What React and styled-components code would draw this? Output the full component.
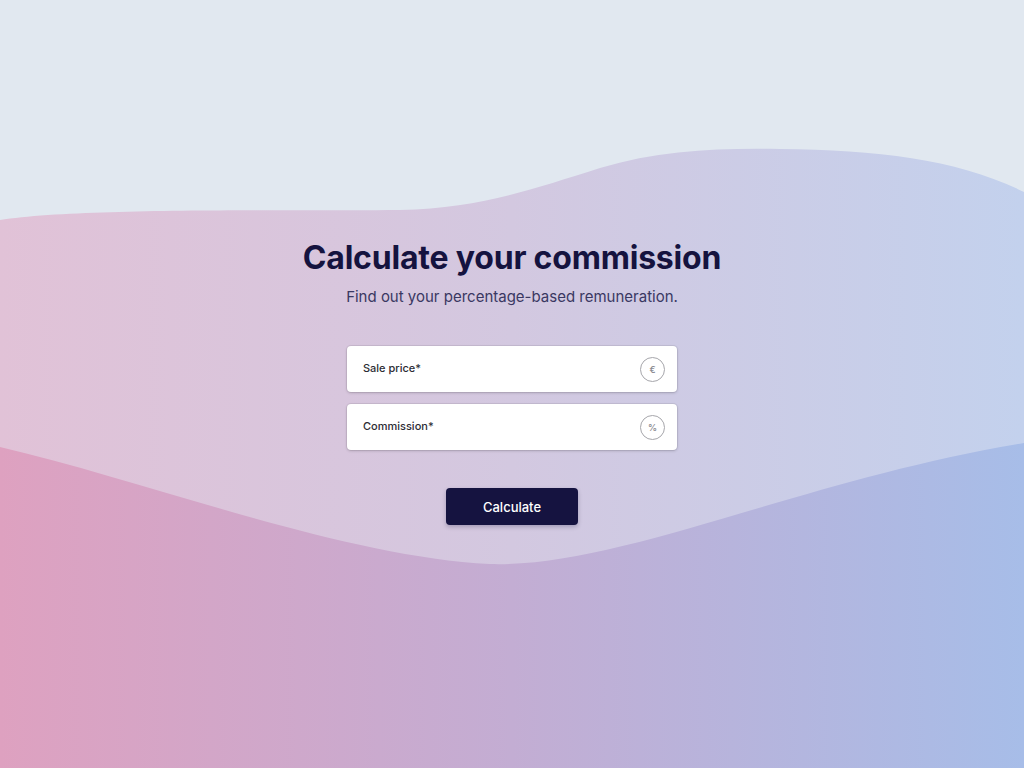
import React from "react";
import styled, { createGlobalStyle } from "styled-components";

const Global = createGlobalStyle`
  html, body { margin: 0; padding: 0; }
  body {
    font-family: Inter, "Noto Sans", "Liberation Sans", sans-serif;
    background: #e1e8f0;
  }
  #root { min-height: 100vh; }
`;

const Page = styled.div`
  position: relative;
  min-height: 100vh;
  overflow: hidden;
  background: #e1e8f0;
`;

const Waves = styled.svg`
  position: absolute;
  inset: 0;
  width: 100%;
  height: 100%;
  z-index: 0;
`;

const Content = styled.main`
  position: relative;
  z-index: 1;
  display: flex;
  flex-direction: column;
  align-items: center;
  padding-top: 238px;
`;

const Title = styled.h1`
  margin: 0;
  font-size: 32px;
  line-height: 40px;
  font-weight: 700;
  color: #15133f;
  letter-spacing: -0.2px;
`;

const Subtitle = styled.p`
  margin: 9px 0 0;
  font-size: 15px;
  line-height: 20px;
  color: #3a3862;
`;

const Form = styled.form`
  margin-top: 39px;
  display: flex;
  flex-direction: column;
  align-items: center;
  gap: 12px;
  width: 330px;
`;

const Field = styled.label`
  box-sizing: border-box;
  width: 100%;
  height: 46px;
  display: flex;
  align-items: center;
  justify-content: space-between;
  padding: 0 12px 0 16px;
  background: #ffffff;
  border-radius: 4px;
  box-shadow: 0 0 0 1px rgba(0, 0, 0, 0.06), 0 1px 3px rgba(0, 0, 0, 0.18);
`;

const Label = styled.span`
  font-size: 11px;
  color: #2c2c34;
  font-weight: 500;
  margin-top: -3px;
`;

const Unit = styled.span`
  box-sizing: border-box;
  width: 25px;
  height: 25px;
  border-radius: 50%;
  border: 1.5px solid #a6a6ab;
  display: flex;
  align-items: center;
  justify-content: center;
  font-size: 9px;
  color: #8d8d93;
  font-weight: 600;
`;

const Button = styled.button`
  margin-top: 26px;
  width: 132px;
  height: 37px;
  border: none;
  border-radius: 4px;
  background: #151340;
  color: #ffffff;
  font-family: inherit;
  font-size: 13px;
  font-weight: 500;
  box-shadow: 0 2px 4px rgba(20, 18, 60, 0.25);
  cursor: pointer;
`;

export default function App() {
  return (
    <Page>
      <Global />
      <Waves viewBox="0 0 1024 768" preserveAspectRatio="none" aria-hidden="true">
        <defs>
          <linearGradient id="mid" x1="0" y1="0" x2="1" y2="0">
            <stop offset="0" stopColor="#e1c2d7" />
            <stop offset="0.5" stopColor="#d3c8e0" />
            <stop offset="1" stopColor="#c3d1ed" />
          </linearGradient>
          <linearGradient id="low" x1="0" y1="0" x2="1" y2="0">
            <stop offset="0" stopColor="#dea1c0" />
            <stop offset="0.5" stopColor="#c3add3" />
            <stop offset="1" stopColor="#a7bde8" />
          </linearGradient>
        </defs>
        <path
          d="M0 220 C80 207 300 211 400 210 C480 208 530 190 600 168 C660 150 720 148 780 149 C880 150 960 160 1024 192 L1024 768 L0 768 Z"
          fill="url(#mid)"
        />
        <path
          d="M0 447 C150 482 340 556 490 564 C620 568 800 480 1024 443 L1024 768 L0 768 Z"
          fill="url(#low)"
        />
      </Waves>
      <Content>
        <Title>Calculate your commission</Title>
        <Subtitle>Find out your percentage-based remuneration.</Subtitle>
        <Form onSubmit={(e) => e.preventDefault()}>
          <Field>
            <Label>Sale price*</Label>
            <Unit>€</Unit>
          </Field>
          <Field>
            <Label>Commission*</Label>
            <Unit>%</Unit>
          </Field>
          <Button type="submit">Calculate</Button>
        </Form>
      </Content>
    </Page>
  );
}
